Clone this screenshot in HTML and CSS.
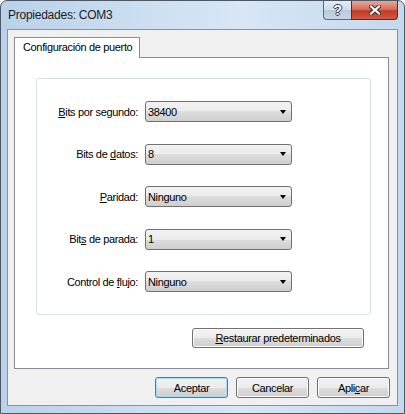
FILE: index.html
```html
<!DOCTYPE html>
<html lang="es">
  <head>
    <meta charset="UTF-8" />
    <meta name="viewport" content="width=device-width, initial-scale=1.0" />
    <title>Propiedades: COM3</title>
    <link rel="stylesheet" href="styles.css">
  </head>
  <body>
    <div class="window">
      <div class="titlebar">
        <span class="title">Propiedades: COM3</span>
        <div class="caption-buttons">
          <span class="cap-btn help">?</span>
          <span class="cap-btn close">
            <svg width="12" height="10" viewBox="0 0 12 10">
              <path d="M2 1.5 L10 8.5 M10 1.5 L2 8.5" stroke="#3b2320" stroke-width="4" stroke-linecap="square" fill="none" />
              <path d="M2 1.5 L10 8.5 M10 1.5 L2 8.5" stroke="#ffffff" stroke-width="2.2" stroke-linecap="square" fill="none" />
            </svg>
          </span>
        </div>
      </div>

      <div class="client">
        <div class="tabs">
          <div class="tab active">Configuración de puerto</div>
        </div>

        <div class="tab-panel">
          <div class="group">
            <div class="row">
              <label><u>B</u>its por segundo:</label>
              <div class="combo"><span>38400</span><i class="arrow"></i></div>
            </div>
            <div class="row">
              <label>Bits de <u>d</u>atos:</label>
              <div class="combo"><span>8</span><i class="arrow"></i></div>
            </div>
            <div class="row">
              <label><u>P</u>aridad:</label>
              <div class="combo"><span>Ninguno</span><i class="arrow"></i></div>
            </div>
            <div class="row">
              <label>Bit<u>s</u> de parada:</label>
              <div class="combo"><span>1</span><i class="arrow"></i></div>
            </div>
            <div class="row">
              <label>Control de <u>f</u>lujo:</label>
              <div class="combo"><span>Ninguno</span><i class="arrow"></i></div>
            </div>
          </div>

          <div class="panel-actions">
            <button class="btn btn-wide"><u>R</u>estaurar predeterminados</button>
          </div>
        </div>

        <div class="dialog-actions">
          <button class="btn btn-default">Aceptar</button>
          <button class="btn">Cancelar</button>
          <button class="btn">Apli<u>c</u>ar</button>
        </div>
      </div>
    </div>
  </body>
</html>
```

FILE: styles.css
```css
body {
  margin: 0;
  padding: 0;
  background: #ffffff;
  font-family: "Liberation Sans", Arial, sans-serif;
  font-size: 11px;
  letter-spacing: -0.35px;
  color: #000;
}
.window {
  box-sizing: border-box;
  width: 405px;
  height: 414px;
  border: 1px solid #4c5866;
  border-radius: 7px 7px 0 0;
  padding: 0 6px 7px 6px;
  background: linear-gradient(90deg, #b9d1ea 0%, #cfe0f2 40%, #d8e6f5 60%, #c4d8ee 100%);
  display: flex;
  flex-direction: column;
}
.titlebar {
  height: 28px;
  margin-left: -6px;
  display: flex;
  justify-content: space-between;
  align-items: flex-start;
}
.title {
  font-size: 12px;
  letter-spacing: -0.25px;
  line-height: 29px;
  padding-left: 7px;
  color: #1e1e1e;
}
.caption-buttons {
  display: flex;
}
.cap-btn {
  box-sizing: border-box;
  height: 19px;
  display: flex;
  align-items: center;
  justify-content: center;
  border: 1px solid #5d6b7b;
  border-top: none;
}
.help {
  width: 28px;
  border-right: none;
  border-radius: 0 0 0 4px;
  background: linear-gradient(180deg, #e3ebf4 0%, #d0dceb 48%, #b9c9dc 52%, #c8d6e6 100%);
  color: #fff;
  font-weight: bold;
  font-size: 14px;
  text-shadow: 1px 0 #2f3a47, -1px 0 #2f3a47, 0 1px #2f3a47, 0 -1px #2f3a47;
}
.close {
  width: 47px;
  border-color: #5a2a26;
  border-radius: 0 0 4px 0;
  background: linear-gradient(180deg, #e6a89c 0%, #d6705f 45%, #c13a28 55%, #d05a40 100%);
}
.client {
  flex: 1;
  border: 1px solid #8594a5;
  background: #f0f0f0;
  padding: 7px 8px 7px 6px;
  display: flex;
  flex-direction: column;
}
.tabs {
  display: flex;
  height: 20px;
}
.tab {
  box-sizing: border-box;
  height: 21px;
  padding: 0 7px 0 8px;
  line-height: 19px;
  border: 1px solid #898c95;
  border-bottom: none;
  background: #ffffff;
  position: relative;
  z-index: 1;
}
.tab-panel {
  box-sizing: border-box;
  height: 312px;
  border: 1px solid #898c95;
  background: #ffffff;
  padding: 20px 17px 0 21px;
}
.group {
  box-sizing: border-box;
  height: 237px;
  border: 1px solid #d5dfe5;
  border-radius: 3px;
  padding: 22px 0 0 0;
  display: flex;
  flex-direction: column;
  gap: 21.5px;
}
.row {
  display: grid;
  grid-template-columns: 101px 147px;
  column-gap: 7px;
  align-items: center;
}
.row label {
  text-align: right;
}
.combo {
  box-sizing: border-box;
  height: 21px;
  border: 1px solid #707070;
  border-radius: 3px;
  background: linear-gradient(180deg, #f2f2f2 0%, #ebebeb 50%, #dddddd 50%, #cfcfcf 100%);
  display: flex;
  align-items: center;
  justify-content: space-between;
  padding: 0 5px 0 2px;
}
.arrow {
  width: 0;
  height: 0;
  border-left: 3.5px solid transparent;
  border-right: 3.5px solid transparent;
  border-top: 4px solid #000;
}
.panel-actions {
  display: flex;
  justify-content: flex-end;
  padding: 13px 7px 0 0;
}
.btn {
  box-sizing: border-box;
  height: 21px;
  width: 73px;
  border: 1px solid #707070;
  border-radius: 3px;
  background: linear-gradient(180deg, #f2f2f2 0%, #ebebeb 50%, #dddddd 50%, #cfcfcf 100%);
  box-shadow: inset 0 0 0 1px #fcfcfc;
  font-family: inherit;
  font-size: 11px;
  letter-spacing: -0.35px;
  color: #000;
  padding: 0;
}
.btn-wide {
  width: 172px;
  height: 20px;
}
.btn-default {
  border-color: #3c7fb1;
  box-shadow: inset 0 0 0 1px #a9dcf5;
}
.dialog-actions {
  display: flex;
  justify-content: flex-end;
  gap: 8px;
  margin-top: 8px;
  margin-right: -1px;
}
```
